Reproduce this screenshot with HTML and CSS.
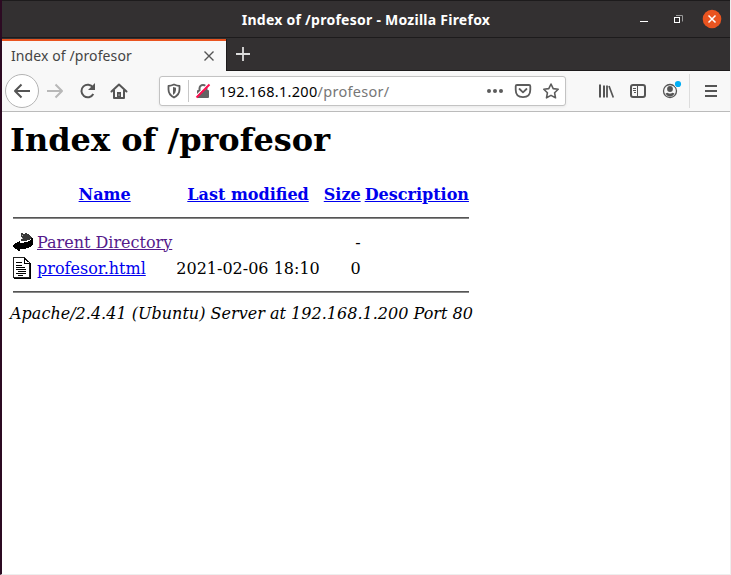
FILE: index.html
```html
<!DOCTYPE html>
<html lang="en">
<head>
<meta charset="utf-8">
<title>Index of /profesor</title>
<link rel="stylesheet" href="styles.css">
</head>
<body>
<div class="window">
  <header class="titlebar">
    <span class="window-title">Index of /profesor - Mozilla Firefox</span>
    <svg class="controls" width="90" height="36" viewBox="0 0 90 36">
      <path d="M4 21.500h8" stroke="#fff"/>
      <path d="M40 15.500h6.500v6" fill="none" stroke="#999"/>
      <rect x="38.500" y="17.500" width="5" height="5" fill="none" stroke="#fff"/>
      <circle cx="76" cy="19" r="9.300" fill="#e95420"/>
      <path d="M72.500 15.500l7 7m0-7l-7 7" stroke="#fff" stroke-width="1.500"/>
    </svg>
  </header>
  <div class="tabs">
    <div class="tab">
      <span class="tab-title">Index of /profesor</span>
      <svg width="12" height="12" viewBox="0 0 12 12"><path d="M1.500 1.500l9 9m0-9l-9 9" stroke="#555" stroke-width="1.400"/></svg>
    </div>
    <svg class="plus" width="32" height="32" viewBox="0 0 32 32"><path d="M9 16h14M16 9v14" stroke="#ddd" stroke-width="1.800"/></svg>
  </div>
  <nav class="toolbar">
    <svg class="nav-icons" width="157" height="40" viewBox="2 71 157 40" fill="none" stroke="#555" stroke-width="2">
      <circle cx="22" cy="91" r="16.500" fill="#fff" stroke="#b4b4b4" stroke-width="1"/>
      <path d="M30 91H15m6.500-6.500L15 91l6.500 6.500" stroke-linejoin="round"/>
      <path d="M47 91h15m-6.500-6.500L62 91l-6.500 6.500" stroke="#b8b8b8" stroke-linejoin="round"/>
      <path d="M93 87.500A6.300 6.300 0 1 0 93.300 94" />
      <path d="M95 83v7h-7z" fill="#555" stroke="none"/>
      <path d="M111.500 91.500l7.500-7 7.500 7" stroke-linecap="round" stroke-linejoin="round"/>
      <path d="M114 90v8h10v-8" stroke-linejoin="round"/>
      <path d="M117 98v-6h4v6" fill="#555" stroke="none"/>
      <path d="M118.500 95h1" stroke="#f8f8f8" stroke-width="1"/>
    </svg>
    <div class="urlbar">
      <svg width="54" height="28" viewBox="160 77 54 28" fill="none">
        <path d="M168.500 86q2.500-.2 5.500-1.500 3 1.300 5.500 1.500v3.500q0 5.200-5.500 8-5.500-2.800-5.500-8z" stroke="#5c5c5c" stroke-width="1.800" stroke-linejoin="round"/>
        <path d="M174 87v8q-3-2-3-5v-2.300z" fill="#5c5c5c" transform="matrix(-1 0 0 1 347 0)"/>
        <path d="M188.500 80v22" stroke="#c7c7c7"/>
        <path d="M199.500 91v-2.500a3.500 3.500 0 0 1 7 0V91" stroke="#636363" stroke-width="2"/>
        <rect x="197" y="90" width="12" height="8" rx="1" fill="#636363"/>
        <path d="M195.500 96.500L208.500 83.500" stroke="#fff" stroke-width="1.500"/>
        <path d="M196.500 97.500L209.500 84.500" stroke="#ff0f50" stroke-width="1.900"/>
      </svg>
      <span class="url">192.168.1.200<span class="path">/profesor/</span></span>
      <svg class="url-actions" width="82" height="28" viewBox="483 77 82 28" fill="none" stroke="#5c5c5c" stroke-width="1.800">
        <g fill="#5c5c5c" stroke="none"><circle cx="489" cy="91" r="2"/><circle cx="495" cy="91" r="2"/><circle cx="501" cy="91" r="2"/></g>
        <path d="M517 85h12q1.300 0 1.300 1.300v3.500q0 7.400-7.300 7.400-7.300 0-7.300-7.400v-3.500q0-1.300 1.300-1.300z"/>
        <path d="M519.500 89l3.500 3.300 3.500-3.300" stroke-linecap="round" stroke-linejoin="round"/>
        <path d="M551 84l2.200 4.600 5 .7-3.600 3.500.9 5-4.500-2.400-4.500 2.400.9-5-3.600-3.500 5-.7z" stroke-width="1.600" stroke-linejoin="round"/>
      </svg>
    </div>
    <svg class="menu-icons" width="134" height="40" viewBox="596 71 134 40" fill="none" stroke="#555">
      <path d="M600 84.500v13M604 85.500v12" stroke-width="2"/>
      <path d="M607 85.500v12" stroke-width="1.800"/>
      <path d="M609 86l4.300 11.500" stroke-width="1.700"/>
      <rect x="631" y="85" width="14" height="12" rx="2" stroke-width="2"/>
      <path d="M637.500 85v12M633 88.500h3m-3 2h3m-2 2h2"/>
      <circle cx="670" cy="91" r="6.500" stroke-width="1.300"/>
      <circle cx="670" cy="89" r="2.900" fill="#555" stroke="none"/>
      <path d="M665.500 93.500q2-1 2.500-.5 2 1 4 0 .5-.5 2.500.5-1.500 3-4.500 3t-4.500-3z" fill="#555" stroke="none"/>
      <circle cx="678" cy="84" r="3.700" fill="#f8f8f8" stroke="none"/>
      <circle cx="678" cy="84" r="3.100" fill="#00aef4" stroke="none"/>
      <path d="M689.500 74v34" stroke="#ddd"/>
      <path d="M705 86h12m-12 5h12m-12 5h12" stroke-width="2"/>
    </svg>
  </nav>
  <main class="page">
    <h1>Index of /profesor</h1>
    <table>
      <tr class="head"><th class="icon"></th><th><a href="#">Name</a></th><th><a href="#">Last modified</a></th><th><a href="#">Size</a></th><th><a href="#">Description</a></th></tr>
      <tr><th colspan="5"><hr></th></tr>
      <tr>
        <td class="icon"><svg width="20" height="22" viewBox="0 0 20 22" shape-rendering="crispEdges">
          <path d="M8 2h2v1h2v-1h2v1h2v1h1v1h1v1h1v2h-2v1h-3v1H8v-2h1v-2H8z" fill="#383838"/>
          <path d="M9 4h1v1H9zM9 7h1v1H9z" fill="#aaa"/>
          <path d="M19 7h1v7h-1v1h-1v1h-2v1h-3v1H7v2H5v-1H4v-1H2v-1H1v-1H0v-2h1v-1h1v-1h2v-1h2v-1h1v2h4v-1h4v-1h2v-1h1v-2h1z" fill="#000"/>
        </svg></td>
        <td><a class="visited" href="#">Parent Directory</a></td><td>&nbsp;</td><td class="num">&nbsp; -</td><td>&nbsp;</td>
      </tr>
      <tr>
        <td class="icon"><svg width="20" height="22" viewBox="0 0 20 22" shape-rendering="crispEdges">
          <path d="M.5.500h11l5 5v15H.5z" fill="#fff" stroke="#222"/>
          <path d="M17.500 6v15.500H1M11.500 1v5.500H17M12 2.500h1m0 1h1m0 1h1" fill="none" stroke="#000"/>
          <path d="M3 5.500h6M3 8.500h6M3 10.500h9M3 12.500h10M5 14.500h8M3 16.500h10M5 18.500h5" stroke="#000"/>
        </svg></td>
        <td><a href="#">profesor.html</a></td><td class="date">2021-02-06 18:10</td><td class="num">&nbsp; 0</td><td>&nbsp;</td>
      </tr>
      <tr><th colspan="5"><hr></th></tr>
    </table>
    <address>Apache/2.4.41 (Ubuntu) Server at 192.168.1.200 Port 80</address>
  </main>
</div>
</body>
</html>
```

FILE: styles.css
```css
* { box-sizing: border-box; }
html, body { margin: 0; height: 575px; overflow: hidden; }
body { background: #fff; }
svg { display: block; flex: none; }
.window {
  width: 731px;
  height: 575px;
  border-left: 2px solid #2c0a22;
  border-right: 1px solid #eee;
  border-bottom: 1px solid #eee;
  font-family: "Noto Sans", sans-serif;
}
.titlebar {
  position: relative;
  height: 38px;
  background: #333031;
  border-top: 1px solid #1d1b1c;
  border-bottom: 1px solid #1d1b1c;
  display: flex;
  align-items: center;
  justify-content: center;
}
.window-title { color: #fff; font-size: 14px; font-weight: 700; letter-spacing: .25px; white-space: nowrap; }
.controls { position: absolute; right: 4px; top: -1px; }
.tabs { height: 33px; display: flex; background: #333031; border-bottom: 1px solid #1d1b1c; }
.tab {
  position: relative;
  width: 224px;
  height: 32px;
  background: #f8f8f8;
  border-top: 2px solid #e95420;
  box-shadow: 1px 0 #1d1b1c;
  margin-top: 1px;
  padding: 0 11px 0 9px;
  display: flex;
  align-items: center;
  justify-content: space-between;
}
.tab-title { font-size: 14px; color: #444; letter-spacing: .1px; white-space: nowrap; margin-top: -2px; }
.plus { margin-left: 1px; }
.toolbar { height: 41px; background: #f8f8f8; border-bottom: 1px solid #bbb; display: flex; }
.urlbar {
  width: 407px;
  height: 30px;
  margin-top: 5px;
  border: 1px solid #c3c3c3;
  border-radius: 3px;
  background: #fff;
  box-shadow: 0 1px 3px #0001;
  display: flex;
  align-items: center;
}
.url { padding-left: 5px; font-size: 14.5px; letter-spacing: .3px; color: #000; white-space: nowrap; }
.path { color: #777; }
.url-actions { margin-left: auto; }
.menu-icons { margin-left: auto; }
.page { padding: 9px 8px; font-family: "DejaVu Serif", serif; font-size: 16px; color: #000; }
h1 { margin: 0 0 21px; font-size: 32px; line-height: 38px; white-space: nowrap; }
table { border-collapse: separate; border-spacing: 2px; line-height: 19px; white-space: nowrap; }
th, td { padding: 1px; }
td.icon, th.icon { width: 22px; height: 24px; }
.num { text-align: right; }
hr { margin: 8px 0; height: 2px; border: 0; border-top: 1px solid #555; border-bottom: 1px solid #888; }
a { color: #00e; }
.visited { color: #551a8b; }
address { font-style: italic; line-height: 19px; letter-spacing: .02px; white-space: nowrap; }
```
